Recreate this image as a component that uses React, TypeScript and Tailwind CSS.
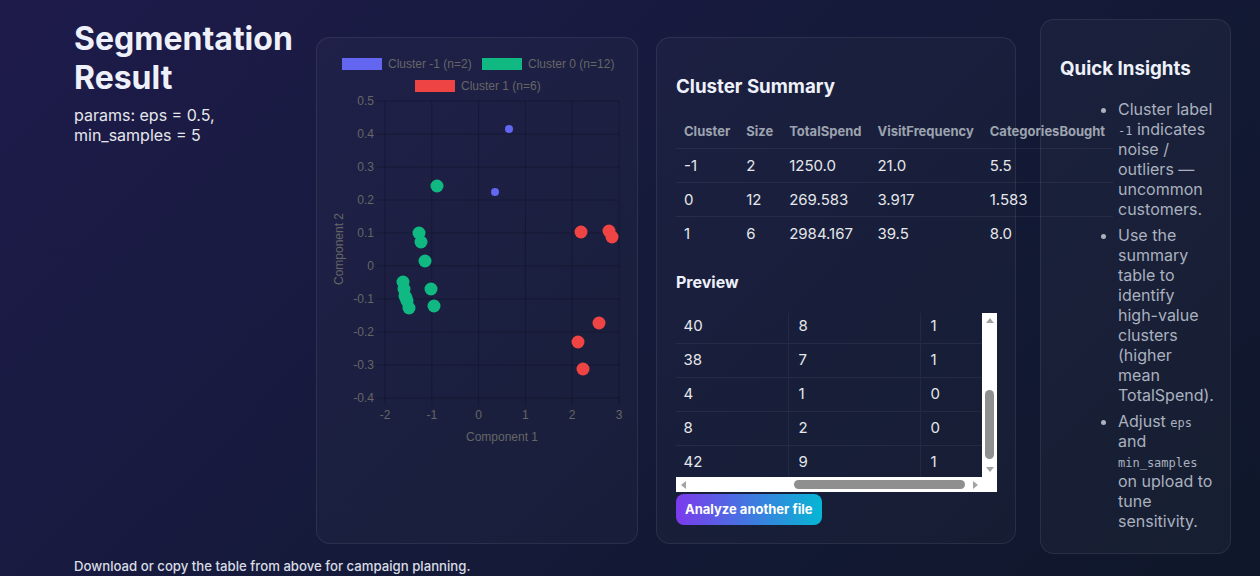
import React, { useLayoutEffect, useRef } from "react";

const summary = [
  { c: "-1", size: "2", spend: "1250.0", visit: "21.0", cats: "5.5" },
  { c: "0", size: "12", spend: "269.583", visit: "3.917", cats: "1.583" },
  { c: "1", size: "6", spend: "2984.167", visit: "39.5", cats: "8.0" },
];

const preview = [
  ["1", "180.5", "3", "1", "0"],
  ["2", "3150.0", "41", "8", "1"],
  ["3", "1200.0", "22", "6", "-1"],
  ["4", "260.0", "5", "2", "0"],
  ["5", "2890.0", "40", "8", "1"],
  ["6", "2750.5", "38", "7", "1"],
  ["7", "150.0", "4", "1", "0"],
  ["8", "320.0", "8", "2", "0"],
  ["9", "3300.0", "42", "9", "1"],
  ["10", "95.0", "2", "1", "0"],
];

const blue = [[192, 91], [178, 154]];
const green = [
  [120, 148], [102, 195], [104, 204], [108, 223], [86, 244], [87, 251],
  [88, 258], [89, 260], [90, 263], [92, 270], [114, 251], [117, 268],
];
const red = [[264, 194], [292, 193], [295, 199], [282, 285], [261, 304], [266, 331]];

const ScatterChart = () => {
  const xs = [-2, -1, 0, 1, 2, 3];
  const ys = ["0.5", "0.4", "0.3", "0.2", "0.1", "0", "-0.1", "-0.2", "-0.3", "-0.4"];
  const grid = "rgba(0,0,0,0.22)";
  return (
    <svg width="322" height="420" className="block" style={{ fontFamily: "'Liberation Sans', Arial, sans-serif" }}>
      {/* legend */}
      <rect x="25" y="20" width="40" height="12" fill="#6366f1" />
      <text x="71" y="30" fontSize="12" fill="#666">Cluster -1 (n=2)</text>
      <rect x="165" y="20" width="40" height="12" fill="#10b981" />
      <text x="211" y="30" fontSize="12" fill="#666">Cluster 0 (n=12)</text>
      <rect x="98" y="42" width="40" height="12" fill="#ef4444" />
      <text x="144" y="52" fontSize="12" fill="#666">Cluster 1 (n=6)</text>

      {/* grid */}
      {xs.map((v, i) => {
        const x = 68 + i * 46.8;
        return (
          <g key={v}>
            <line x1={x} y1={63} x2={x} y2={368} stroke={grid} />
            <text x={x} y={381} fontSize="12" fill="#666" textAnchor="middle">{v}</text>
          </g>
        );
      })}
      {ys.map((v, i) => {
        const y = 63 + i * 33;
        return (
          <g key={v}>
            <line x1={60} y1={y} x2={302} y2={y} stroke={grid} />
            <text x={57} y={y + 4} fontSize="12" fill="#666" textAnchor="end">{v}</text>
          </g>
        );
      })}
      <text x="185" y="403" fontSize="12" fill="#666" textAnchor="middle">Component 1</text>
      <text x="0" y="0" fontSize="12" fill="#666" textAnchor="middle" transform="translate(26 211) rotate(-90)">Component 2</text>

      {blue.map(([x, y], i) => <circle key={"b" + i} cx={x} cy={y} r="4" fill="#6366f1" />)}
      {green.map(([x, y], i) => <circle key={"g" + i} cx={x} cy={y} r="6.5" fill="#10b981" />)}
      {red.map(([x, y], i) => <circle key={"r" + i} cx={x} cy={y} r="6.5" fill="#ef4444" />)}
    </svg>
  );
};

const Code = ({ children }: { children: React.ReactNode }) => (
  <code className="font-['DejaVu_Sans_Mono',monospace] text-[12px] leading-none">{children}</code>
);

// small scrollbar arrow
const Arrow = ({ dir }: { dir: "up" | "down" | "left" | "right" }) => {
  const pts = {
    up: "0,6 4,1 8,6",
    down: "0,1 4,6 8,1",
    left: "6,0 1,4 6,8",
    right: "2,0 7,4 2,8",
  }[dir];
  return (
    <svg width="8" height="8" viewBox="0 0 8 8">
      <polygon points={pts} fill="#a3a3a3" />
    </svg>
  );
};

export default function App() {
  const box = useRef<HTMLDivElement>(null);
  useLayoutEffect(() => {
    if (box.current) {
      box.current.scrollTop = 174;
      box.current.scrollLeft = 189;
    }
  }, []);

  return (
    <div className="min-h-screen bg-[linear-gradient(135deg,#1e1b4b_0%,#141a38_55%,#0f172a_100%)] font-['Inter',sans-serif] text-[#e5e7eb]">
      <div className="flex items-start pl-[74px] pt-[19px]">
        {/* left column */}
        <div className="w-[226px] shrink-0">
          <h1 className="text-[32px] font-bold leading-[39px] text-[#eef0fa]">Segmentation Result</h1>
          <p className="mt-[8px] text-[16px] leading-[20px] text-[#e5e7eb]">params: eps = 0.5, min_samples = 5</p>
        </div>

        {/* chart card */}
        <div className="ml-[16px] mt-[18px] h-[507px] w-[322px] shrink-0 rounded-[14px] border border-white/[0.08] bg-white/[0.025]">
          <ScatterChart />
        </div>

        {/* summary card */}
        <div className="ml-[18px] mt-[18px] h-[507px] w-[360px] shrink-0 rounded-[14px] border border-white/[0.08] bg-white/[0.025] p-[19px]">
          <h3 className="mt-[16px] text-[18.72px] font-bold leading-[28px] text-[#eef0fa]">Cluster Summary</h3>
          <table className="mt-[14px] w-max whitespace-nowrap border-collapse">
            <thead>
              <tr className="border-b border-white/[0.06]">
                {["Cluster", "Size", "TotalSpend", "VisitFrequency", "CategoriesBought"].map((h) => (
                  <th key={h} className="px-[8px] py-[8px] text-left text-[13px] font-bold leading-[17px] text-[#9ca3af]">{h}</th>
                ))}
              </tr>
            </thead>
            <tbody>
              {summary.map((r, i) => (
                <tr key={r.c} className={i < summary.length - 1 ? "border-b border-white/[0.06]" : ""}>
                  {[r.c, r.size, r.spend, r.visit, r.cats].map((v, j) => (
                    <td key={j} className="px-[8px] py-[8px] text-[15px] leading-[17px] text-[#e5e7eb]">{v}</td>
                  ))}
                </tr>
              ))}
            </tbody>
          </table>

          <h4 className="mt-[20px] text-[16px] font-bold leading-[24px] text-[#eef0fa]">Preview</h4>
          <div className="mt-[19px] grid h-[179px] w-[321px] grid-cols-[306px_15px] grid-rows-[164px_15px]">
            <div ref={box} className="overflow-hidden">
              <table className="w-[495px] table-fixed border-collapse">
                <colgroup>
                  <col className="w-[90px]" />
                  <col className="w-[96px]" />
                  <col className="w-[115px]" />
                  <col className="w-[132px]" />
                  <col className="w-[62px]" />
                </colgroup>
                <thead>
                  <tr className="border-b border-white/[0.06]">
                    {["CustomerID", "TotalSpend", "VisitFrequency", "CategoriesBought", "Cluster"].map((h, j) => (
                      <th key={h} className={"h-[34px] truncate pl-[10px] text-left text-[13px] font-bold text-[#9ca3af]" + (j < 4 ? " border-r border-white/[0.05]" : "")}>{h}</th>
                    ))}
                  </tr>
                </thead>
                <tbody>
                  {preview.map((r, i) => (
                    <tr key={i} className="border-b border-white/[0.06]">
                      {r.map((v, j) => (
                        <td key={j} className={"h-[34px] pl-[10px] text-[15px] text-[#e5e7eb]" + (j < 4 ? " border-r border-white/[0.05]" : "")}>{v}</td>
                      ))}
                    </tr>
                  ))}
                </tbody>
              </table>
            </div>
            {/* vertical scrollbar */}
            <div className="flex flex-col items-center bg-white">
              <div className="flex h-[15px] items-center justify-center"><Arrow dir="up" /></div>
              <div className="mt-[62px] h-[69px] w-[9px] rounded-full bg-[#8f8f8f]" />
              <div className="flex-1" />
              <div className="flex h-[15px] items-center justify-center"><Arrow dir="down" /></div>
            </div>
            {/* horizontal scrollbar */}
            <div className="flex items-center bg-white">
              <div className="flex w-[15px] justify-center"><Arrow dir="left" /></div>
              <div className="ml-[103px] h-[9px] w-[171px] rounded-full bg-[#8f8f8f]" />
              <div className="flex-1" />
              <div className="flex w-[15px] justify-center"><Arrow dir="right" /></div>
            </div>
            <div className="bg-white" />
          </div>
          <button className="mt-[2px] h-[31px] rounded-[8px] bg-[linear-gradient(90deg,#7c3aed,#06b6d4)] px-[9px] text-[13px] font-bold text-white">
            Analyze another file
          </button>
        </div>

        {/* insights card */}
        <div className="ml-[24px] h-[535px] w-[191px] shrink-0 rounded-[14px] border border-white/[0.08] bg-white/[0.03] pl-[19px] pr-[15px] pt-[20px]">
          <h3 className="mt-[15px] text-[18.72px] font-bold leading-[28px] text-[#eef0fa]">Quick Insights</h3>
          <ul className="mt-[16px] list-disc pl-[58px] text-[16px] leading-[20px] text-[#aab1bf] marker:text-[#aab1bf]">
            <li>Cluster label <Code>-1</Code> indicates noise / outliers — uncommon customers.</li>
            <li className="mt-[6px]">Use the summary table to identify high-value clusters (higher mean TotalSpend).</li>
            <li className="mt-[6px]">Adjust <Code>eps</Code> and <Code>min_samples</Code> on upload to tune sensitivity.</li>
          </ul>
        </div>
      </div>

      <p className="mt-[3px] pl-[74px] text-[13.2px] font-medium leading-[18px] text-[#d8dce4]">
        Download or copy the table from above for campaign planning.
      </p>
    </div>
  );
}
